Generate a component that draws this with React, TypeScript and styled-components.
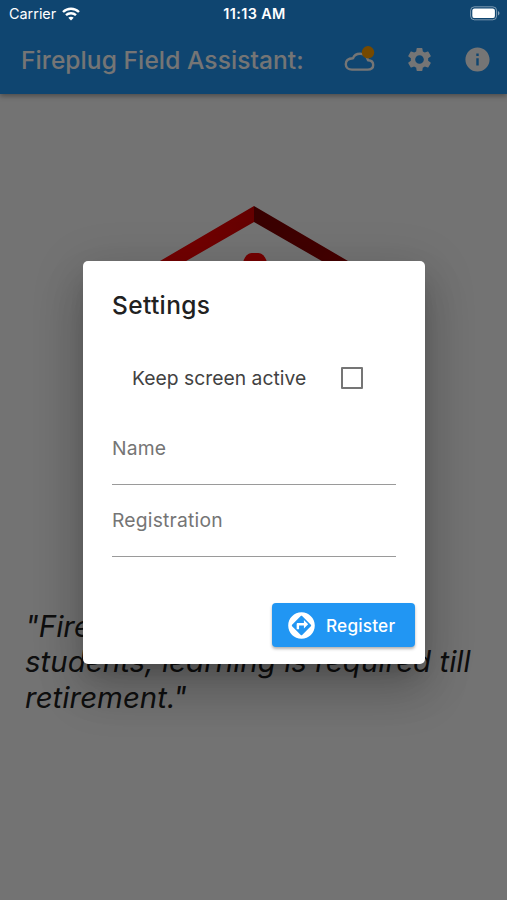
import React from "react";
import styled, { createGlobalStyle } from "styled-components";
import { MdAssistantDirection, MdInfo, MdSettings } from "react-icons/md";

const GlobalStyle = createGlobalStyle`
  * { box-sizing: border-box; }
  body { margin: 0; overflow: hidden; font-family: Inter, "Liberation Sans", sans-serif; }
`;

const Screen = styled.div`
  position: relative;
  width: 507px;
  height: 900px;
  overflow: hidden;
  background: #fafafa;
`;

const Header = styled.header`
  position: relative;
  height: 94px;
  padding: 25px 15px 0 21px;
  display: flex;
  align-items: center;
  background: #2196f3;
  box-shadow: 0 2px 5px rgba(0, 0, 0, 0.35);
`;

const Title = styled.h1`
  margin: 0;
  width: 323px;
  color: #fff;
  font-size: 24.5px;
  font-weight: 500;
  line-height: 30px;
  letter-spacing: 0.09px;
  white-space: nowrap;
`;

const Actions = styled.div`
  flex: 1;
  display: flex;
  align-items: center;
  justify-content: space-between;
  color: #fff;
  svg { display: block; flex: none; }
`;

const Body = styled.main`
  display: flex;
  flex-direction: column;
  padding: 112px 25px 0;
`;

const Logo = styled.svg`
  align-self: center;
  display: block;
  width: 240px;
  height: 260px;
`;

const Quote = styled.p`
  margin: 143px 0 0;
  color: #212121;
  font-size: 29.4px;
  font-style: italic;
  line-height: 35.4px;
  letter-spacing: 0.05px;
  white-space: nowrap;
`;

const Barrier = styled.div`
  position: absolute;
  inset: 0;
  display: flex;
  align-items: flex-start;
  justify-content: center;
  padding-top: 261px;
  background: rgba(0, 0, 0, 0.54);
`;

const Dialog = styled.section`
  width: 342px;
  height: 403px;
  margin-left: 1px;
  padding: 29px 29px 0;
  border-radius: 5px;
  background: #fff;
  box-shadow: 0 13px 18px -8px rgba(0, 0, 0, 0.2), 0 29px 46px 3px rgba(0, 0, 0, 0.14),
    0 11px 50px 6px rgba(0, 0, 0, 0.12);
`;

const DialogTitle = styled.h2`
  margin: 0;
  color: #212121;
  font-size: 24.5px;
  font-weight: 500;
  line-height: 30px;
  letter-spacing: 0.35px;
`;

const Option = styled.label`
  height: 60px;
  margin-top: 28px;
  padding: 0 33px 0 20px;
  display: flex;
  align-items: center;
  justify-content: space-between;
  color: #424242;
  font-size: 19.3px;
  letter-spacing: 0.02px;
  white-space: nowrap;
`;

const Box = styled.span`
  width: 22px;
  height: 22px;
  border: 2px solid #757575;
  border-radius: 1px;
`;

const Fields = styled.div`
  margin-top: 5px;
`;

const Field = styled.div`
  height: 72px;
  padding-top: 23px;
  border-bottom: 1px solid #9a9a9a;
  color: #757575;
  font-size: 19.3px;
  line-height: 24px;
  letter-spacing: 0.2px;
`;

const DialogActions = styled.div`
  display: flex;
  justify-content: flex-end;
  margin: 46px -19px 0 0;
`;

const Register = styled.button`
  width: 143px;
  height: 44px;
  padding: 0 0 0 15px;
  border: 0;
  border-radius: 4px;
  display: flex;
  align-items: center;
  gap: 10px;
  background: #2196f3;
  color: #fff;
  font: 500 17.2px Inter, sans-serif;
  letter-spacing: 0.2px;
  box-shadow: 0 2px 3px rgba(0, 0, 0, 0.3);
`;

const StatusBar = styled.div`
  position: absolute;
  inset: 0 0 auto;
  height: 27px;
  padding: 0 7px 0 9px;
  display: grid;
  grid-template-columns: 1fr auto 1fr;
  align-items: center;
  color: #fff;
  font-size: 14.4px;
`;

const Carrier = styled.span`
  display: flex;
  align-items: center;
  gap: 6px;
`;

const Time = styled.span`
  font-weight: 600;
  font-size: 14.4px;
  letter-spacing: 0.4px;
`;

const Battery = styled.svg`
  justify-self: end;
`;

export default function App() {
  return (
    <Screen>
      <GlobalStyle />
      <Header>
        <Title>Fireplug Field Assistant:</Title>
        <Actions>
          <svg width="32" height="28" viewBox="0 0 32 28" fill="none">
            <path
              d="M8 23.600H23.500C27 23.600 29.200 21.800 29.200 19C29.200 16.200 27 14.400 24 14.300C23 10.300 20 7.800 16 7.800C12.500 7.800 10 9.600 9 12.300C4.500 12.500 1.800 14.800 1.800 18.200C1.800 21.500 4.300 23.600 8 23.600Z"
              stroke="currentColor"
              strokeWidth="2.400"
              strokeLinejoin="round"
            />
            <circle cx="24" cy="6.300" r="6.200" fill="#ffa000" />
          </svg>
          <MdSettings size={29} />
          <MdInfo size={29} />
        </Actions>
      </Header>
      <Body>
        <Logo viewBox="0 0 240 260">
          <defs>
            <linearGradient id="roofLeft" x1="0" y1="1" x2="1" y2="0">
              <stop offset="0" stopColor="#ff0000" />
              <stop offset="0.6" stopColor="#f80000" />
              <stop offset="1" stopColor="#d80000" />
            </linearGradient>
            <linearGradient id="roofRight" x1="0" y1="0" x2="1" y2="1">
              <stop offset="0" stopColor="#780000" />
              <stop offset="1" stopColor="#b00000" />
            </linearGradient>
          </defs>
          <path d="M120 0V16L40 62V200H26V55Z" fill="url(#roofLeft)" />
          <path d="M120 0V16L200 62V200H214V55Z" fill="url(#roofRight)" />
          <path d="M109 56C111 50 114 47 118 47H124C128 47 131 50 133 56V150H109Z" fill="#ff0000" />
        </Logo>
        <Quote>
          "Firefighters are
          <br />
          students, learning is required till
          <br />
          retirement."
        </Quote>
      </Body>
      <Barrier>
        <Dialog role="dialog">
          <DialogTitle>Settings</DialogTitle>
          <Option>
            Keep screen active
            <Box role="checkbox" aria-checked={false} />
          </Option>
          <Fields>
            <Field>Name</Field>
            <Field>Registration</Field>
          </Fields>
          <DialogActions>
            <Register>
              <MdAssistantDirection size={29} />
              Register
            </Register>
          </DialogActions>
        </Dialog>
      </Barrier>
      <StatusBar>
        <Carrier>
          Carrier
          <svg width="18" height="14" viewBox="0 0 18 14" fill="none" stroke="currentColor" strokeWidth="2.4">
            <path d="M1 5C5.5 .7 12.500 .7 17 5M4 8.200C6.800 5.600 11.200 5.600 14 8.200" />
            <path d="M9 13.500L6.300 10.700C7.800 9.400 10.200 9.400 11.700 10.700Z" fill="currentColor" stroke="none" />
          </svg>
        </Carrier>
        <Time>11:13 AM</Time>
        <Battery width="30" height="15" viewBox="0 0 30 15" fill="none">
          <rect x="0.600" y="0.800" width="26" height="13" rx="3.800" stroke="#fff" strokeOpacity="0.450" />
          <rect x="2.300" y="2.500" width="22.600" height="9.600" rx="2.200" fill="#fff" />
          <path d="M28 5V9.500C30 8.500 30 6 28 5Z" fill="#fff" fillOpacity="0.500" />
        </Battery>
      </StatusBar>
    </Screen>
  );
}
